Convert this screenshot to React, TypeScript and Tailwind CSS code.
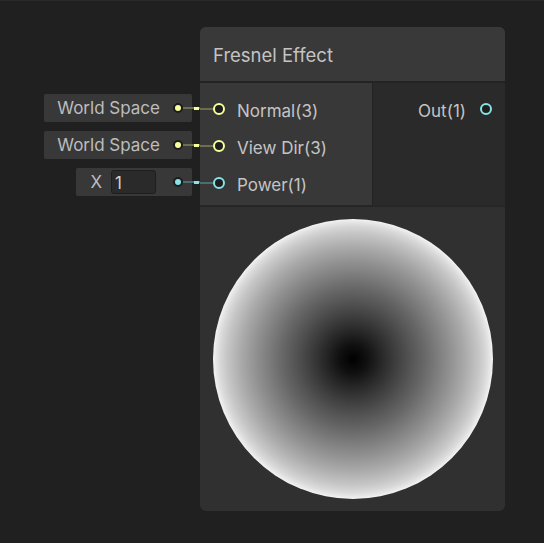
import React from "react";

const YELLOW = "#f6ff9a";
const CYAN = "#84e4e7";

function Dot({ color }: { color: string }) {
  return (
    <div className="w-[10px] h-[10px] rounded-full bg-[#1c1c1c] flex items-center justify-center shrink-0">
      <div className="w-[6px] h-[6px] rounded-full" style={{ backgroundColor: color }} />
    </div>
  );
}

function Ring({ color }: { color: string }) {
  return (
    <div
      className="w-[12px] h-[12px] rounded-full border-2 bg-[#1e1e1e] shrink-0"
      style={{ borderColor: color }}
    />
  );
}

function Gap({ dim, bright }: { dim: string; bright: string }) {
  return (
    <div className="flex items-center w-[8px] shrink-0">
      <div className="w-[2px] h-[2px]" style={{ backgroundColor: dim }} />
      <div className="w-[5px] h-[3px]" style={{ backgroundColor: bright }} />
      <div className="w-[1px] h-[2px]" style={{ backgroundColor: dim }} />
    </div>
  );
}

function LabelRow({ children, width, color, dim, tail }: { children: React.ReactNode; width: string; color: string; dim: string; tail: string }) {
  return (
    <div className="flex items-center">
      <div className={`${width} h-[28px] bg-[#383838] rounded-[2px] flex items-center justify-end`}>
        {children}
        <div className={tail} />
        <Dot color={color} />
        <div className="w-[9px] h-[2px]" style={{ backgroundColor: dim }} />
      </div>
      <Gap dim={dim} bright={color} />
    </div>
  );
}

function InPort({ label, color, dim }: { label: string; color: string; dim: string }) {
  return (
    <div className="h-[37px] flex items-center">
      <div className="w-[13px] h-[2px]" style={{ backgroundColor: dim }} />
      <Ring color={color} />
      <span className="ml-[12px] text-[17px] text-[#c4c4c4] leading-none pt-[5px]">{label}</span>
    </div>
  );
}

const stops: [number, string][] = [
  [0, "#000000"],
  [0.1, "#101010"],
  [0.2, "#272727"],
  [0.3, "#3d3d3d"],
  [0.4, "#525252"],
  [0.5, "#666666"],
  [0.6, "#7c7c7c"],
  [0.7, "#929292"],
  [0.8, "#aaaaaa"],
  [0.9, "#c6c6c6"],
  [0.95, "#d8d8d8"],
  [0.98, "#e7e7e7"],
  [1, "#f4f4f4"],
];

export default function App() {
  return (
    <div
      className="w-[544px] h-[543px] bg-[#202020] border-t border-[#2a2a2a] flex items-start pl-[44px] pt-[26px]"
      style={{ fontFamily: "Inter, 'Noto Sans', sans-serif" }}
    >
      <div className="w-[156px] mt-[67px] flex flex-col items-end gap-[9px]">
        <LabelRow width="w-[148px]" color={YELLOW} dim="#6c6e50" tail="w-[13px]">
          <span className="text-[17px] text-[#bdbdbd] leading-none pt-[1px]">World Space</span>
        </LabelRow>
        <LabelRow width="w-[148px]" color={YELLOW} dim="#6c6e50" tail="w-[13px]">
          <span className="text-[17px] text-[#bdbdbd] leading-none pt-[1px]">World Space</span>
        </LabelRow>
        <LabelRow width="w-[116px]" color={CYAN} dim="#4b6d6e" tail="w-[17px]">
          <span className="text-[17px] text-[#bdbdbd] leading-none mr-[9px] pt-[1px]">X</span>
          <div className="w-[45px] h-[24px] bg-[#2a2a2a] border border-[#1e1e1e] rounded-[3px] flex items-center pl-[3px]">
            <span className="text-[17px] text-[#d2d2d2] leading-none pt-[2px]">1</span>
          </div>
        </LabelRow>
      </div>

      <div className="w-[305px] h-[484px] rounded-[6px] overflow-hidden flex flex-col bg-[#303030]">
        <div className="h-[54px] bg-[#393939] flex items-center pl-[13px] shrink-0">
          <span className="text-[18.5px] text-[#c4c4c4] leading-none pt-[3px]">Fresnel Effect</span>
        </div>
        <div className="h-[2px] bg-[#232323] shrink-0" />
        <div className="h-[122px] flex shrink-0">
          <div className="w-[172px] bg-[#383838] pt-[7px] flex flex-col">
            <InPort label="Normal(3)" color={YELLOW} dim="#6c6e50" />
            <InPort label="View Dir(3)" color={YELLOW} dim="#6c6e50" />
            <InPort label="Power(1)" color={CYAN} dim="#4b6d6e" />
          </div>
          <div className="w-[1px] bg-[#242424]" />
          <div className="flex-1 bg-[#2a2a2a] pt-[7px] flex flex-col">
            <div className="h-[37px] flex items-center justify-end pr-[13px]">
              <span className="text-[17px] text-[#c4c4c4] leading-none pt-[5px] mr-[14px]">Out(1)</span>
              <Ring color={CYAN} />
            </div>
          </div>
        </div>
        <div className="h-[2px] bg-[#262626] shrink-0" />
        <div className="flex-1 flex items-center justify-center">
          <svg width="280" height="280" viewBox="0 0 280 280">
            <defs>
              <radialGradient id="fres" cx="50%" cy="50%" r="50%">
                {stops.map(([o, c]) => (
                  <stop key={o} offset={o} stopColor={c} />
                ))}
              </radialGradient>
            </defs>
            <circle cx="140" cy="140" r="140" fill="url(#fres)" />
          </svg>
        </div>
      </div>
    </div>
  );
}
